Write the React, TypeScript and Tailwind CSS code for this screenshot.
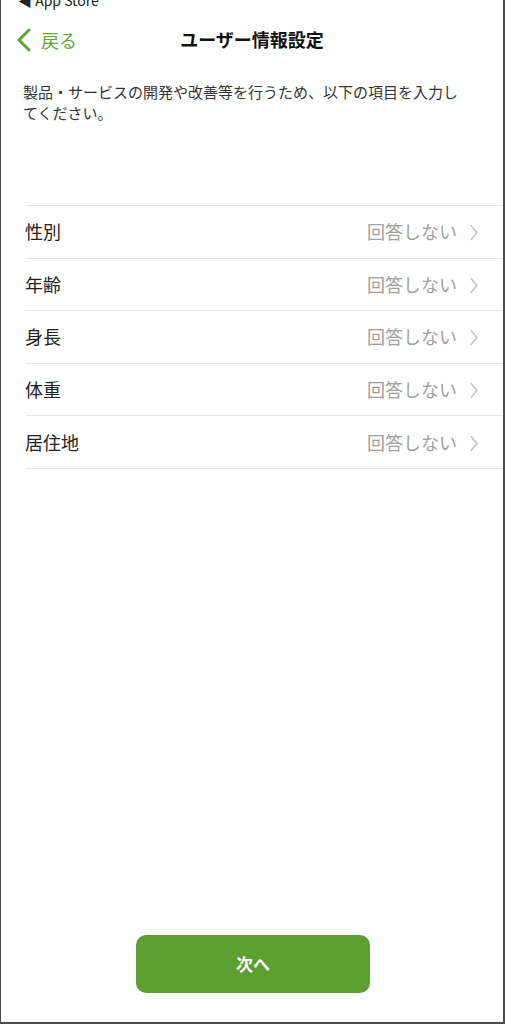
const FONT = { fontFamily: '"Noto Sans CJK JP", "Noto Sans", sans-serif' }

const rows = ['性別', '年齢', '身長', '体重', '居住地']

function BackChevron() {
  return (
    <svg width="16" height="24" viewBox="0 0 16 24" fill="none">
      <polyline points="13,2 3,12 13,22" stroke="currentColor" strokeWidth="3" strokeLinecap="round" strokeLinejoin="round" />
    </svg>
  )
}

function RowChevron() {
  return (
    <svg width="10" height="17" viewBox="0 0 10 17" fill="none">
      <polyline points="2,1.5 8,8.5 2,15.5" stroke="currentColor" strokeWidth="1.6" strokeLinecap="round" strokeLinejoin="round" />
    </svg>
  )
}

export default function App() {
  return (
    <div
      className="w-[505px] h-[1024px] bg-white border-l border-r-2 border-b-2 border-[#4b4b4b] flex flex-col overflow-hidden"
      style={FONT}
    >
      {/* status bar remnant */}
      <div className="h-[10px] overflow-hidden relative">
        <p className="absolute left-[17px] top-[-9px] text-[14px] leading-[18px] text-[#222]">◀ App Store</p>
      </div>

      {/* nav bar */}
      <div className="h-[58px] relative flex items-center justify-center">
        <button className="absolute left-[15px] top-[18px] flex items-center text-[#5fa33a]">
          <BackChevron />
          <span className="text-[18px] leading-[24px] ml-[9px]">戻る</span>
        </button>
        <h1 className="text-[18px] font-bold text-[#111] leading-[24px] -mt-[1px]">ユーザー情報設定</h1>
      </div>

      {/* description */}
      <p className="ml-[22px] mt-[13px] w-[445px] text-[15px] leading-[21px] text-[#333]">
        製品・サービスの開発や改善等を行うため、以下の項目を入力してください。
      </p>

      {/* list */}
      <div className="ml-[25px] mt-[82px] border-t border-[#e6e6e6]">
        {rows.map(r => (
          <div key={r} className="h-[52.6px] flex items-center border-b border-[#e6e6e6]">
            <span className="-ml-[1px] text-[18px] text-[#222] flex-1">{r}</span>
            <span className="text-[18px] text-[#a0a0a0] mr-[2px]">回答しない</span>
            <span className="text-[#c4c4c4] ml-[10px] mr-[24px] mt-[2px]">
              <RowChevron />
            </span>
          </div>
        ))}
      </div>

      <div className="flex-1" />

      <div className="flex justify-center mb-[29px]">
        <button className="w-[234px] h-[58px] rounded-[10px] bg-[#5c9e2f] text-white text-[17px] font-bold ml-[2px]">
          次へ
        </button>
      </div>
    </div>
  )
}
